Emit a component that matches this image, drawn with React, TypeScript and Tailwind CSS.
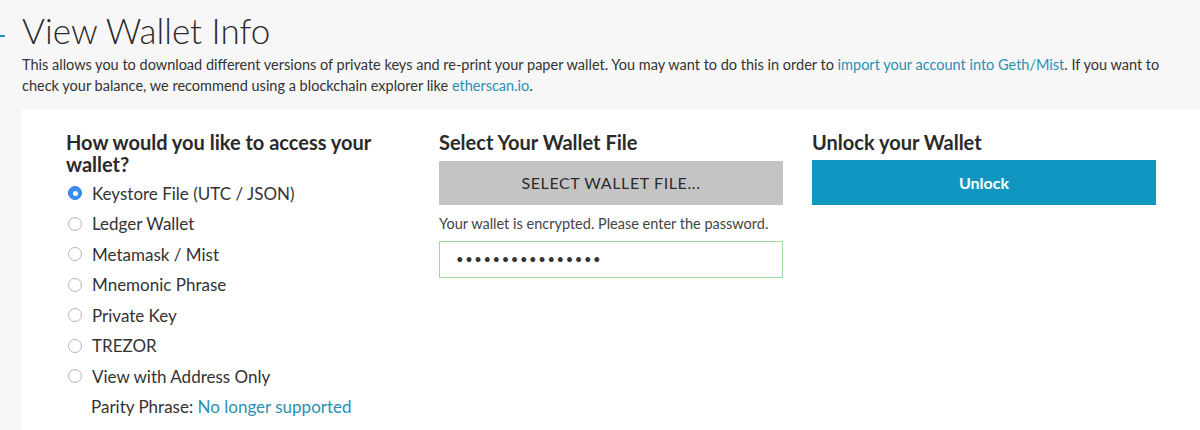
const options = [
  "Keystore File (UTC / JSON)",
  "Ledger Wallet",
  "Metamask / Mist",
  "Mnemonic Phrase",
  "Private Key",
  "TREZOR",
  "View with Address Only",
];

function Radio({ checked }: { checked: boolean }) {
  if (checked) {
    return (
      <span className="w-[14px] h-[14px] rounded-full bg-[#3c8df3] border border-[#2f7fe0] flex items-center justify-center">
        <span className="w-[5px] h-[5px] rounded-full bg-white" />
      </span>
    );
  }
  return <span className="w-[14px] h-[14px] rounded-full bg-white border border-[#b5b5b5]" />;
}

export default function App() {
  return (
    <div className="w-[1200px] h-[430px] overflow-hidden bg-[#f7f7f7] text-[#333] font-['Lato','Noto_Sans',sans-serif]">
      <div className="flex items-center pt-[10px]">
        <span className="w-[5px] h-[2px] bg-[#1d96c3] mt-[12px]" />
        <h1 className="ml-[17px] text-[35px] leading-[40px] font-light text-[#2b2b2b]">View Wallet Info</h1>
      </div>
      <p className="mt-[4px] pl-[22px] pr-[30px] text-[14.5px] leading-[21px]">
        This allows you to download different versions of private keys and re-print your paper wallet. You may want to do
        this in order to <span className="text-[#2a8fb3]">import your account into Geth/Mist</span>. If you want to check
        your balance, we recommend using a blockchain explorer like <span className="text-[#2a8fb3]">etherscan.io</span>.
      </p>
      <div className="mt-[13px] ml-[22px] bg-white h-[400px] pt-[22px] pl-[44px] flex gap-[29px]">
        <div className="w-[344px]">
          <h3 className="w-[320px] text-[20px] leading-[22px] font-bold text-[#2a2a2a]">
            How would you like to access your wallet?
          </h3>
          <div className="mt-[3px]">
            {options.map((o, i) => (
              <label key={o} className="h-[30.5px] flex items-center gap-[10px] pl-[2px] text-[17px]">
                <Radio checked={i === 0} />
                <span>{o}</span>
              </label>
            ))}
            <div className="h-[30.5px] flex items-center pl-[25px] text-[17px]">
              Parity Phrase:&nbsp;<span className="text-[#2a8fb3]">No longer supported</span>
            </div>
          </div>
        </div>
        <div className="w-[344px]">
          <h3 className="text-[20px] leading-[22px] font-bold text-[#2a2a2a]">Select Your Wallet File</h3>
          <div className="mt-[8px] h-[44px] bg-[#c4c4c4] flex items-center justify-center text-[16px] tracking-[0.6px] text-[#2b2b2b]">
            SELECT WALLET FILE...
          </div>
          <p className="mt-[10px] text-[14.5px] leading-[18px] text-[#444]">Your wallet is encrypted. Please enter the password.</p>
          <div className="mt-[8px] h-[37px] border border-[#9fd99f] flex items-center pl-[16px]">
            <span className="text-[13px] tracking-[1.6px] text-[#333]">••••••••••••••••</span>
          </div>
        </div>
        <div className="w-[344px]">
          <h3 className="text-[20px] leading-[22px] font-bold text-[#2a2a2a]">Unlock your Wallet</h3>
          <div className="mt-[7px] h-[45px] bg-[#1097c1] flex items-center justify-center text-[16px] font-bold text-white">
            Unlock
          </div>
        </div>
      </div>
    </div>
  );
}
